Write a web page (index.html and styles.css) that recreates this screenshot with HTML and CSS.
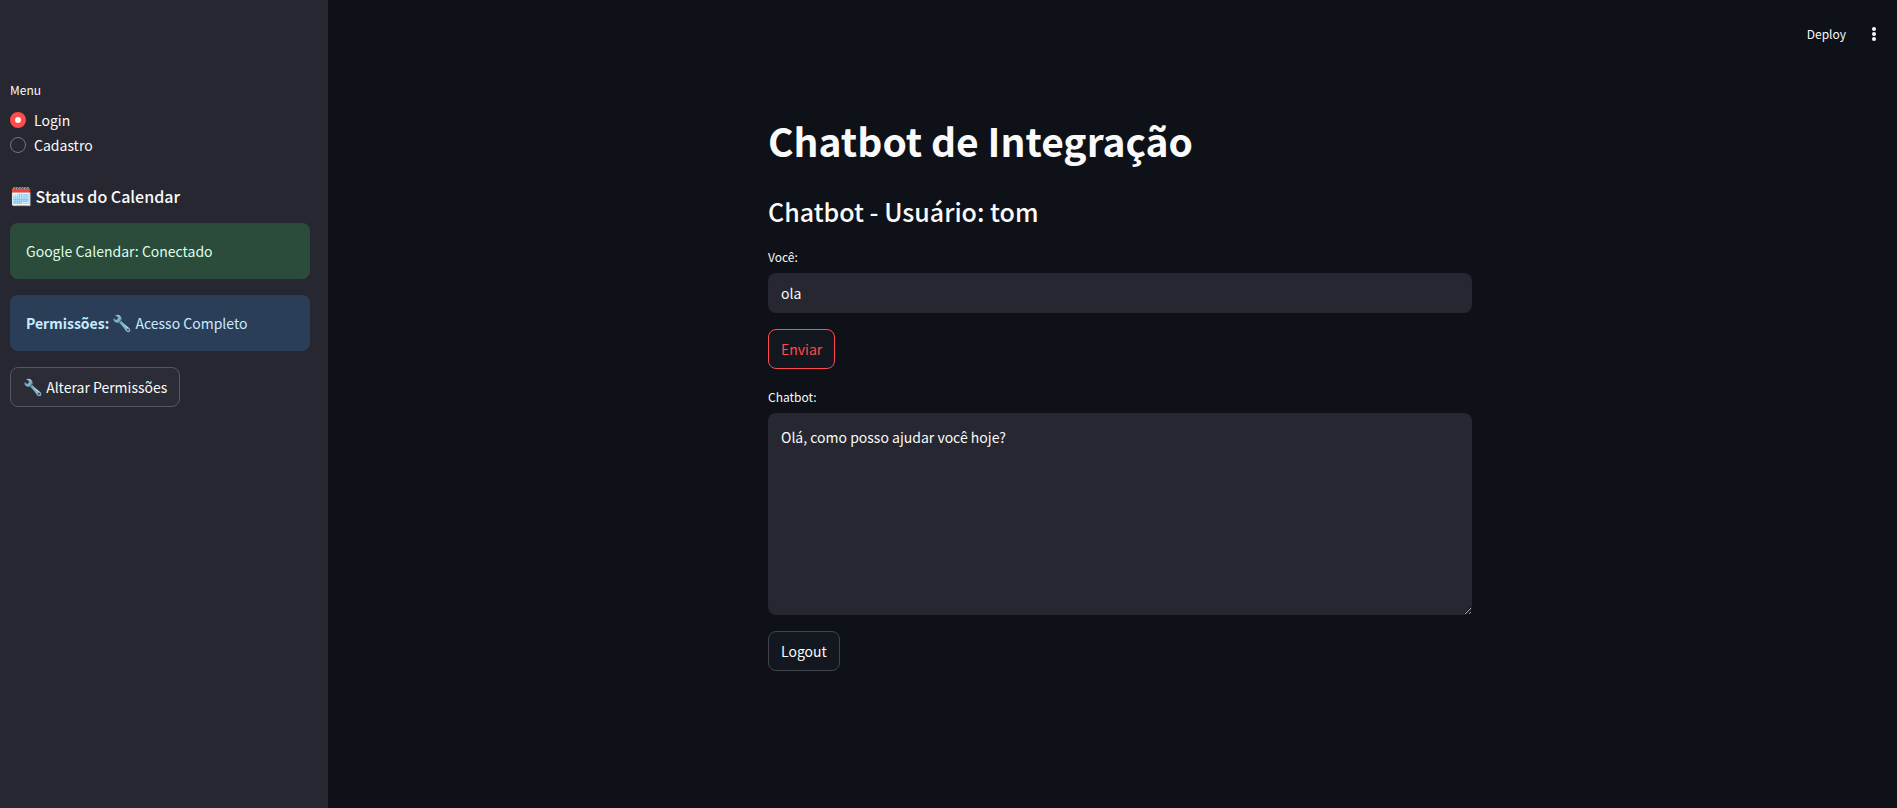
FILE: index.html
```html
<!DOCTYPE html>
<html lang="pt-BR">
<head>
<meta charset="utf-8">
<title>Chatbot de Integração</title>
<link rel="stylesheet" href="styles.css">
</head>
<body>
<div class="app">
  <aside class="sidebar">
    <fieldset class="menu">
      <legend class="label">Menu</legend>
      <label class="option"><input type="radio" name="menu" checked>Login</label>
      <label class="option"><input type="radio" name="menu">Cadastro</label>
    </fieldset>
    <h3 class="section-title"><span class="emoji-large">🗓️</span> Status do Calendar</h3>
    <div class="alert alert-success">Google Calendar: Conectado</div>
    <div class="alert alert-info"><strong>Permissões:</strong> <span class="emoji">🔧</span> Acesso Completo</div>
    <button class="button" type="button"><span class="emoji">🔧</span> Alterar Permissões</button>
  </aside>
  <div class="page">
    <header class="toolbar">
      <button class="deploy" type="button">Deploy</button>
      <button class="more" type="button" aria-label="Menu principal">
        <svg class="more-icon" viewBox="0 0 20 20" width="20" height="20" fill="currentColor"><circle cx="10" cy="5" r="2"/><circle cx="10" cy="10" r="2"/><circle cx="10" cy="15" r="2"/></svg>
      </button>
    </header>
    <main class="content">
      <h1 class="title">Chatbot de Integração</h1>
      <h2 class="subtitle">Chatbot - Usuário: tom</h2>
      <div class="field">
        <label class="label" for="message">Você:</label>
        <input class="control" id="message" type="text" value="ola">
      </div>
      <button class="button button-active" type="button">Enviar</button>
      <div class="field field-reply">
        <label class="label" for="reply">Chatbot:</label>
        <textarea class="control reply" id="reply">Olá, como posso ajudar você hoje?</textarea>
      </div>
      <button class="button" type="button">Logout</button>
    </main>
  </div>
</div>
</body>
</html>
```

FILE: styles.css
```css
* {
  box-sizing: border-box;
}

body {
  margin: 0;
  background: #0e1117;
  color: #fafafa;
  font: 14px/24px "Noto Sans CJK JP", "Noto Sans", sans-serif;
}

button,
input,
textarea {
  font: inherit;
  color: inherit;
}

.app {
  display: flex;
  min-height: 100vh;
}

.sidebar {
  flex: 0 0 328px;
  display: flex;
  flex-direction: column;
  align-items: flex-start;
  gap: 16px;
  padding: 80px 18px 16px 10px;
  background: #262730;
}

.menu {
  margin: 0;
  padding: 0;
  border: 0;
}

.label {
  display: block;
  padding: 0;
  font-size: 12px;
  line-height: 20px;
}

.menu .label {
  margin-bottom: 8px;
}

.option {
  display: flex;
  align-items: center;
  gap: 8px;
  line-height: 24px;
  margin-bottom: 1px;
}

.option input {
  appearance: none;
  width: 16px;
  height: 16px;
  margin: 0;
  border: 1px solid #75767c;
  border-radius: 50%;
}

.option input:checked {
  border: 5px solid #ff4b4b;
  background: #fafafa;
}

.section-title {
  margin: 11px 0 0;
  font-size: 16px;
  line-height: 22px;
  font-weight: 500;
}

.emoji,
.emoji-large {
  line-height: 1;
}

.emoji {
  font-size: 16px;
}

.emoji-large {
  font-size: 18px;
}

.alert {
  width: 100%;
  padding: 16px;
  border-radius: 8px;
}

.alert-success {
  background: #2b4b3b;
  color: #dffde9;
}

.alert-info {
  background: #2b3e58;
  color: #c7ebff;
}

.button {
  min-height: 40px;
  padding: 7px 12px;
  border: 1px solid #55565e;
  border-radius: 8px;
  background: #2b2c36;
}

.page {
  flex: 1;
  min-width: 0;
}

.toolbar {
  display: flex;
  align-items: center;
  justify-content: flex-end;
  gap: 18px;
  height: 68px;
  padding-right: 13px;
}

.deploy,
.more {
  display: flex;
  padding: 0;
  border: 0;
  background: none;
}

.deploy {
  font-size: 12px;
}

.content {
  display: flex;
  flex-direction: column;
  align-items: flex-start;
  gap: 16px;
  padding: 44px 16px 80px 31px;
  max-width: 751px;
  margin: 0 auto;
}

.title {
  margin: 0;
  font-size: 39px;
  line-height: 56px;
  font-weight: 700;
}

.subtitle {
  margin: 7px 0 0;
  font-size: 25px;
  line-height: 40px;
  font-weight: 500;
}

.content .button {
  background: #131720;
  border-color: #41444c;
}

.content .button-active {
  border-color: #ff4b4b;
  color: #ff4b4b;
}

.field {
  display: flex;
  flex-direction: column;
  gap: 6px;
  width: 100%;
}

.field-reply {
  margin-top: 2px;
}

.control {
  display: block;
  width: 100%;
  min-height: 40px;
  padding: 8px 13px;
  border: 0;
  border-radius: 8px;
  outline: 0;
  background: #262730;
}

.reply {
  height: 202px;
  padding: 12px 13px;
  resize: vertical;
}
```
